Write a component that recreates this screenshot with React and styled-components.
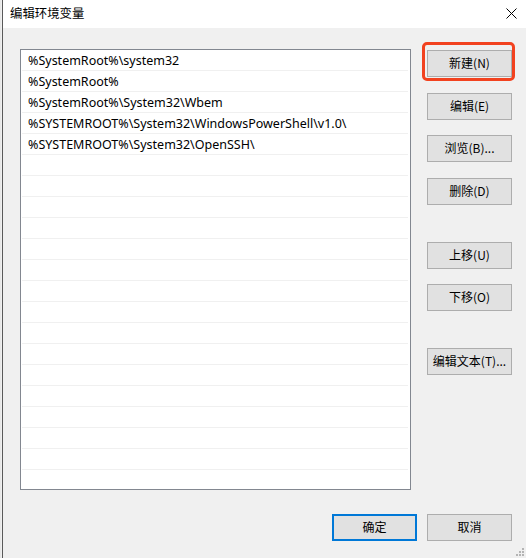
import React from 'react';
import styled, { createGlobalStyle } from 'styled-components';

const GlobalStyle = createGlobalStyle`
  html, body {
    margin: 0;
    padding: 0;
    background: #f0f0f0;
  }
  body {
    font-family: "Noto Sans", "Noto Sans CJK SC", sans-serif;
    font-size: 12px;
    color: #000;
  }
`;

const paths = [
  '%SystemRoot%\\system32',
  '%SystemRoot%',
  '%SystemRoot%\\System32\\Wbem',
  '%SYSTEMROOT%\\System32\\WindowsPowerShell\\v1.0\\',
  '%SYSTEMROOT%\\System32\\OpenSSH\\',
];

const ROW_COUNT = 21;

// Screen: a sliver of the window behind on the left, then the dialog
const Screen = styled.div`
  display: flex;
  width: 526px;
  height: 558px;
  overflow: hidden;
`;

const BehindEdge = styled.div`
  width: 3px;
  flex: none;
  background: #f0f0f0;
  border-right: 1px solid #5a5a5a;
  box-sizing: border-box;
  border-left: 1px solid #e8e8e8;
`;

const Dialog = styled.div`
  flex: 1;
  display: flex;
  flex-direction: column;
  background: #f0f0f0;
  position: relative;
`;

const TitleBar = styled.div`
  height: 28px;
  flex: none;
  background: #fff;
  display: flex;
  align-items: center;
  justify-content: space-between;
  padding: 0 9px 2px 7px;
  box-sizing: border-box;
`;

const Title = styled.span`
  font-family: "Noto Sans CJK SC", sans-serif;
  font-size: 12.4px;
  color: #000;
`;

const CloseIcon = () => (
  <svg width="11" height="11" viewBox="0 0 11 11">
    <path d="M0.5 0.5L10.5 10.5M10.5 0.5L0.5 10.5" stroke="#000" strokeWidth="1" />
  </svg>
);

const Body = styled.div`
  flex: 1;
  display: flex;
  flex-direction: column;
  padding: 21px 14px 0 17px;
`;

const Main = styled.div`
  display: flex;
  gap: 16px;
`;

const ListBox = styled.div`
  width: 391px;
  height: 441px;
  box-sizing: border-box;
  border: 1px solid #828790;
  background: #fff;
  overflow: hidden;
  padding: 0 2px 0 1px;
`;

const Row = styled.div`
  height: 21px;
  box-sizing: border-box;
  border-bottom: 1px solid #f0f0f0;
  display: flex;
  align-items: center;
  padding-left: 6px;
  padding-top: 1px;
  white-space: nowrap;
  font-family: "Noto Sans", "Noto Sans CJK SC", sans-serif;
  font-size: 12.5px;
`;

const Side = styled.div`
  display: flex;
  flex-direction: column;
  padding-top: 1px;
`;

const Button = styled.button`
  width: 85px;
  height: 27px;
  box-sizing: border-box;
  background: #e1e1e1;
  border: ${(p) => (p.$primary ? '2px solid #0078d7' : '1px solid #adadad')};
  font-family: "Noto Sans CJK SC", sans-serif;
  font-size: 12px;
  color: #000;
  padding: 0 0 2px;
  margin-top: ${(p) => p.$gap || 0}px;
  cursor: default;
`;

const HighlightWrap = styled.div`
  position: relative;
`;

const Highlight = styled.div`
  position: absolute;
  left: -5px;
  top: -8px;
  right: -3px;
  bottom: -4px;
  border: 3px solid #f2421f;
  border-radius: 5px;
  pointer-events: none;
`;

const Footer = styled.div`
  display: flex;
  justify-content: flex-end;
  gap: 10px;
  margin-top: 24px;
`;

const Grip = styled.svg`
  position: absolute;
  right: 2px;
  bottom: 2px;
`;

const sideButtons = [
  { label: '编辑(E)', gap: 16 },
  { label: '浏览(B)...', gap: 15 },
  { label: '删除(D)', gap: 16 },
  { label: '上移(U)', gap: 37 },
  { label: '下移(O)', gap: 15 },
  { label: '编辑文本(T)...', gap: 37 },
];

export default function App() {
  const rows = Array.from({ length: ROW_COUNT }, (_, i) => paths[i] || '');
  return (
    <>
      <GlobalStyle />
      <Screen>
        <BehindEdge />
        <Dialog>
          <TitleBar>
            <Title>编辑环境变量</Title>
            <CloseIcon />
          </TitleBar>
          <Body>
            <Main>
              <ListBox>
                {rows.map((text, i) => (
                  <Row key={i}>{text}</Row>
                ))}
              </ListBox>
              <Side>
                <HighlightWrap>
                  <Button>新建(N)</Button>
                  <Highlight />
                </HighlightWrap>
                {sideButtons.map((b) => (
                  <Button key={b.label} $gap={b.gap}>
                    {b.label}
                  </Button>
                ))}
              </Side>
            </Main>
            <Footer>
              <Button $primary>确定</Button>
              <Button>取消</Button>
            </Footer>
          </Body>
          <Grip width="9" height="9" viewBox="0 0 9 9">
            <g fill="#b4b4b4">
              <rect x="7" y="1" width="2" height="2" />
              <rect x="4" y="4" width="2" height="2" />
              <rect x="7" y="4" width="2" height="2" />
              <rect x="1" y="7" width="2" height="2" />
              <rect x="4" y="7" width="2" height="2" />
              <rect x="7" y="7" width="2" height="2" />
            </g>
          </Grip>
        </Dialog>
      </Screen>
    </>
  );
}
